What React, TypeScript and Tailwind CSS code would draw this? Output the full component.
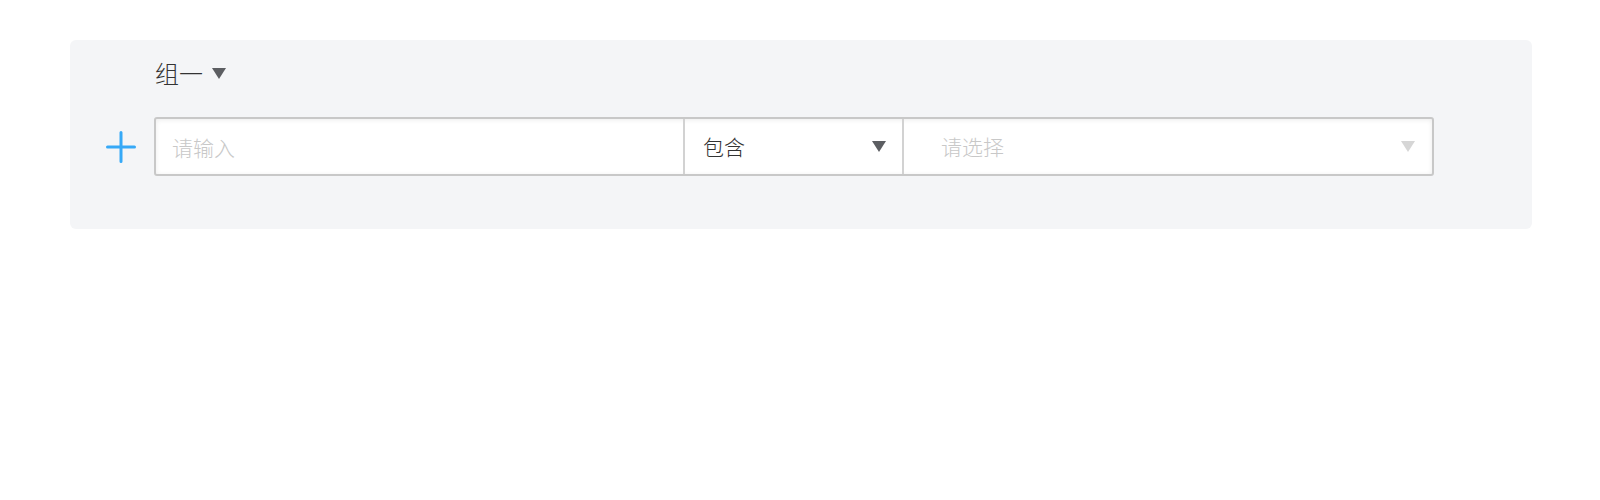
import React from 'react';

const Caret: React.FC<{ color: string }> = ({ color }) => (
  <svg width="14" height="11" viewBox="0 0 14 11">
    <path d="M0 0 H14 L7 11 Z" fill={color} />
  </svg>
);

const App: React.FC = () => {
  return (
    <div className="min-h-[500px] bg-white pt-[40px] pl-[70px]" style={{ fontFamily: '"Noto Sans CJK SC", "Noto Sans", sans-serif' }}>
      <div className="w-[1462px] bg-[#f4f5f7] rounded-md pl-[36px] pt-[17px] pb-[53px]">
        {/* Group title */}
        <div className="ml-[49px] flex items-center gap-[9px] h-[32px]">
          <span className="text-[24px] leading-[32px] font-light text-[#333]">组一</span>
          <span className="mt-[1px]">
            <Caret color="#5c5e62" />
          </span>
        </div>

        {/* Condition row */}
        <div className="mt-[28px] flex items-center gap-[18px]">
          <button className="w-[30px] h-[32px] flex items-center justify-center">
            <svg width="30" height="32" viewBox="0 0 30 32">
              <path d="M15 1.5 V30.5 M1.5 16 H28.5" stroke="#36a9f7" strokeWidth="3" strokeLinecap="round" fill="none" />
            </svg>
          </button>

          <div className="w-[1280px] h-[59px] flex bg-white border-2 border-[#c8c8c8] rounded-[3px] shadow-[inset_0_1px_5px_rgba(0,0,0,0.08)]">
            <input
              className="w-[527px] h-full px-[16px] text-[21px] font-light text-[#333] bg-transparent outline-none placeholder:text-[#c8c8c8]"
              placeholder="请输入"
            />
            <div className="w-[219px] h-full border-l-2 border-[#d2d2d2] flex items-center justify-between pl-[18px] pr-[16px]">
              <span className="text-[21px] font-light text-[#333]">包含</span>
              <Caret color="#5c5e62" />
            </div>
            <div className="flex-1 h-full border-l-2 border-[#d2d2d2] flex items-center justify-between pl-[37px] pr-[17px]">
              <span className="text-[21px] font-light text-[#c8c8c8]">请选择</span>
              <Caret color="#d6d6d6" />
            </div>
          </div>
        </div>
      </div>
    </div>
  );
};

export default App;
